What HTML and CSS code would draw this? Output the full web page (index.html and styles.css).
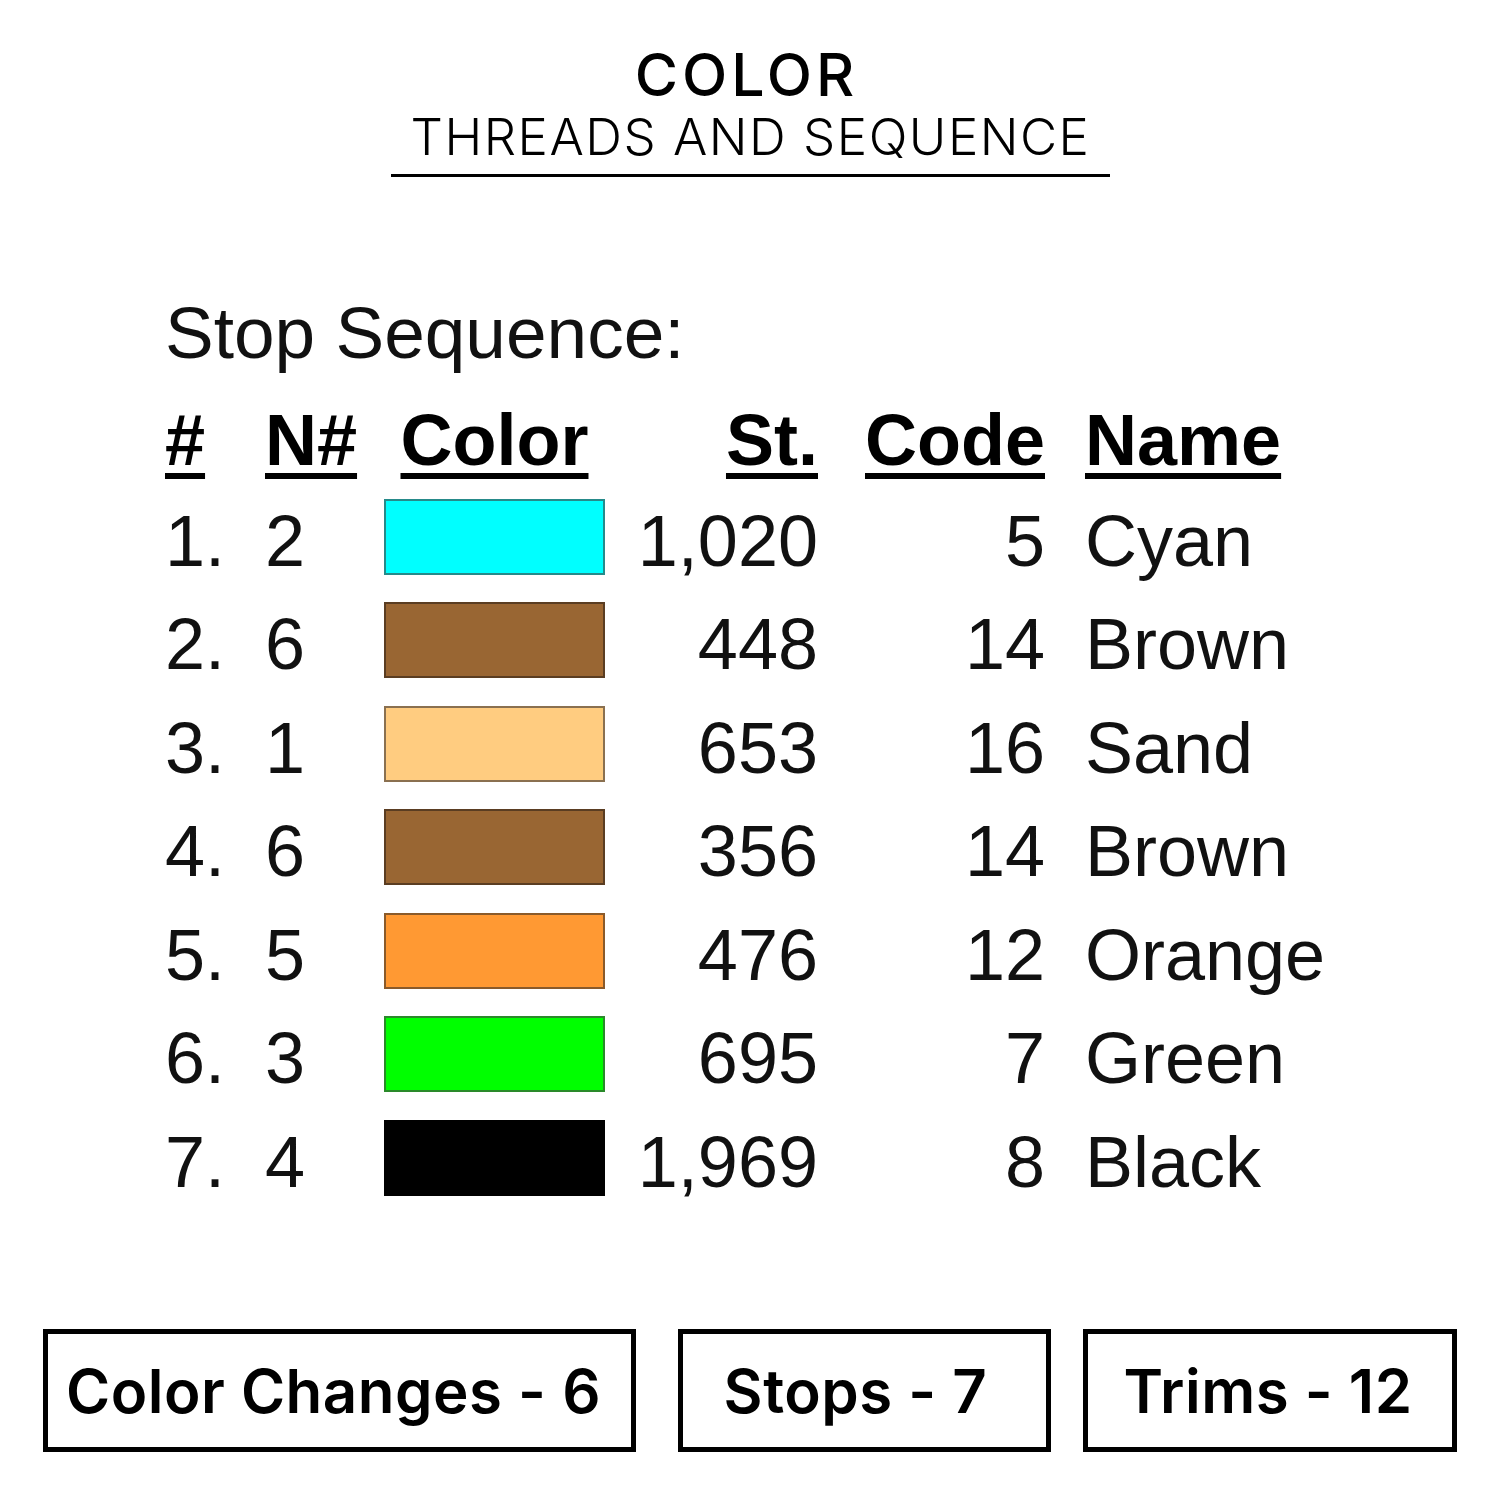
FILE: index.html
```html
<!DOCTYPE html>
<html>
<head>
<meta charset="utf-8">
<link rel="stylesheet" href="styles.css">
</head>
<body>
<div class="page">
  <header class="head">
    <div class="title">COLOR</div>
    <div class="subtitle">THREADS AND SEQUENCE</div>
  </header>

  <section class="seq">
    <div class="seq-title">Stop Sequence:</div>
    <div class="grid">
      <div class="h c1"><u>#</u></div>
      <div class="h c2"><u>N#</u></div>
      <div class="h c3"><u>Color</u></div>
      <div class="h c4"><u>St.</u></div>
      <div class="h c5"><u>Code</u></div>
      <div class="h c6"><u>Name</u></div>

      <div class="c1">1.</div><div class="c2">2</div><div class="c3"><span class="sw cyan"></span></div><div class="c4">1,020</div><div class="c5">5</div><div class="c6">Cyan</div>
      <div class="c1">2.</div><div class="c2">6</div><div class="c3"><span class="sw brown"></span></div><div class="c4">448</div><div class="c5">14</div><div class="c6">Brown</div>
      <div class="c1">3.</div><div class="c2">1</div><div class="c3"><span class="sw sand"></span></div><div class="c4">653</div><div class="c5">16</div><div class="c6">Sand</div>
      <div class="c1">4.</div><div class="c2">6</div><div class="c3"><span class="sw brown"></span></div><div class="c4">356</div><div class="c5">14</div><div class="c6">Brown</div>
      <div class="c1">5.</div><div class="c2">5</div><div class="c3"><span class="sw orange"></span></div><div class="c4">476</div><div class="c5">12</div><div class="c6">Orange</div>
      <div class="c1">6.</div><div class="c2">3</div><div class="c3"><span class="sw green"></span></div><div class="c4">695</div><div class="c5">7</div><div class="c6">Green</div>
      <div class="c1">7.</div><div class="c2">4</div><div class="c3"><span class="sw black"></span></div><div class="c4">1,969</div><div class="c5">8</div><div class="c6">Black</div>
    </div>
  </section>

  <footer class="stats">
    <div class="stat stat-a">Color Changes - 6</div>
    <div class="stat stat-b">Stops - 7</div>
    <div class="stat stat-c">Trims - 12</div>
  </footer>
</div>
</body>
</html>
```
FILE: styles.css
```css
html, body {
  margin: 0;
  padding: 0;
  background: #fff;
}
.page {
  width: 1500px;
  height: 1500px;
  color: #000;
  display: flex;
  flex-direction: column;
}
.head {
  display: flex;
  flex-direction: column;
  align-items: center;
  padding-top: 42px;
  padding-left: 1px;
}
.title {
  font-family: Inter, "Noto Sans", sans-serif;
  font-weight: 500;
  font-size: 59px;
  line-height: 66px;
  letter-spacing: 4px;
  margin-left: -8px;
}
.subtitle {
  font-family: Inter, "Noto Sans", sans-serif;
  font-weight: 300;
  font-size: 51px;
  line-height: 58px;
  letter-spacing: 1.5px;
  padding: 0 20px 8px;
  border-bottom: 3px solid #000;
}
.seq {
  padding-left: 165px;
  margin-top: 114px;
  font-family: "Liberation Sans", Arial, sans-serif;
}
.seq-title {
  font-size: 73px;
  line-height: 84px;
  color: #111;
}
.grid {
  display: grid;
  grid-template-columns: 100px 119px 221px 213px 227px auto;
  grid-template-rows: 100px;
  grid-auto-rows: 103.5px;
  align-items: center;
  font-size: 72px;
  line-height: 1;
  margin-top: 14px;
  color: #111;
}
.h {
  font-weight: bold;
  color: #000;
  padding-top: 2px;
}
.h u {
  text-decoration: underline;
  text-decoration-thickness: 6px;
  text-underline-offset: 8px;
}
.c3 { display: flex; justify-content: center; }
.c4, .c5 { text-align: right; }
.c6 { padding-left: 40px; }
.sw {
  display: block;
  width: 221px;
  height: 76px;
  box-sizing: border-box;
  border: 2px solid;
  margin-top: -8px;
}
.cyan { background: #00ffff; border-color: #268a8a; }
.brown { background: #996633; border-color: #5a3d22; }
.sand { background: #ffcc80; border-color: #8a7050; }
.orange { background: #ff9933; border-color: #8a5a2a; }
.green { background: #00ff00; border-color: #2a8a2a; }
.black { background: #000; border-color: #000; }

.stats {
  margin-top: auto;
  margin-bottom: 48px;
  padding: 0 43px;
  display: flex;
}
.stat {
  box-sizing: border-box;
  height: 123px;
  border: 5px solid #000;
  display: flex;
  align-items: center;
  justify-content: center;
  font-family: Inter, "Noto Sans", sans-serif;
  font-weight: 600;
  font-size: 60px;
  letter-spacing: 0.5px;
}
.stat-a { width: 593px; padding-right: 12px; }
.stat-b { width: 373px; padding-right: 18px; margin-left: 42px; }
.stat-c { width: 374px; padding-right: 4px; margin-left: 32px; }
```
